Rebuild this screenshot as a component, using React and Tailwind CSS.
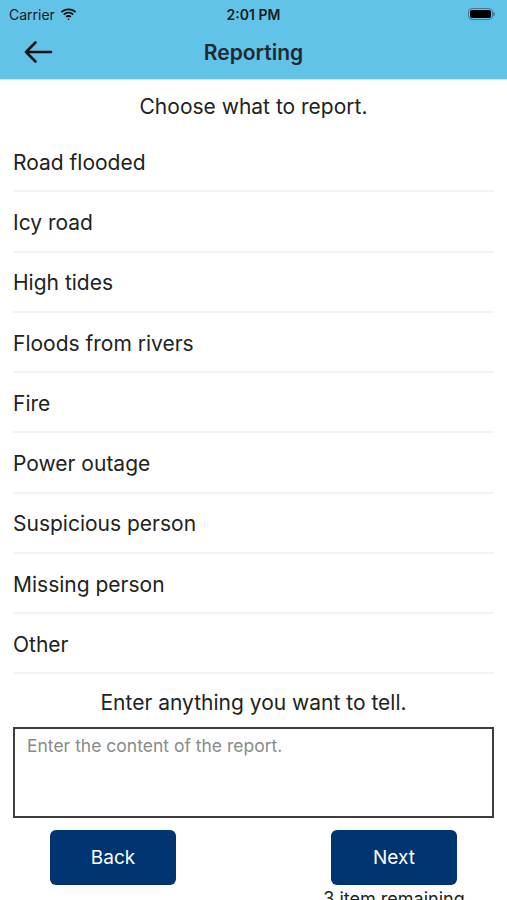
import React from "react";

const items = [
  "Road flooded",
  "Icy road",
  "High tides",
  "Floods from rivers",
  "Fire",
  "Power outage",
  "Suspicious person",
  "Missing person",
  "Other",
];

export default function App() {
  return (
    <div
      className="w-[507px] h-[900px] overflow-hidden bg-white text-[#1c1c1e]"
      style={{ fontFamily: "Inter, 'Noto Sans', sans-serif" }}
    >
      <div className="bg-[#62c3e8] border-b border-[#cfe3ea]">
        <div className="h-[28px] flex items-center justify-between px-[9px] relative">
          <div className="flex items-center gap-[5px] text-[14px] text-[#1a1a1a]">
            <span>Carrier</span>
            <svg width="17" height="12" viewBox="0 0 17 12">
              <path d="M8.5 2.2c2.5 0 4.8 1 6.5 2.6l1.2-1.3C14.2 1.6 11.5.4 8.5.4S2.8 1.6.8 3.5L2 4.8C3.7 3.2 6 2.2 8.5 2.2z" fill="#111" />
              <path d="M8.5 5.6c1.6 0 3 .6 4.1 1.6l1.2-1.3C12.4 4.6 10.5 3.8 8.5 3.8s-3.9.8-5.3 2.1l1.2 1.3c1.1-1 2.5-1.6 4.1-1.6z" fill="#111" />
              <path d="M8.5 8.9c.7 0 1.3.3 1.8.7l1.2-1.3c-.8-.7-1.9-1.2-3-1.2s-2.2.5-3 1.2l1.2 1.3c.5-.4 1.1-.7 1.8-.7z M8.5 10.2l-1 1.1 1 1 1-1z" fill="#111" />
            </svg>
          </div>
          <div className="absolute left-1/2 -translate-x-1/2 text-[14px] font-semibold text-[#1a1a1a]">
            2:01 PM
          </div>
          <div className="flex items-center mr-[3px]">
            <div className="w-[25px] h-[12px] rounded-[4px] border border-[#3a7d98] p-[1px]">
              <div className="w-full h-full rounded-[2px] bg-black" />
            </div>
            <div className="w-[2px] h-[4px] bg-[#3a7d98] rounded-r-sm" />
          </div>
        </div>
        <div className="h-[51px] flex items-center relative">
          <svg className="absolute left-[23px] top-[12px]" width="30" height="24" viewBox="0 0 30 24">
            <path d="M28 12H3M12.5 2.5L3 12l9.5 9.5" stroke="#111" strokeWidth="2.6" fill="none" strokeLinecap="round" strokeLinejoin="round" />
          </svg>
          <div className="w-full text-center text-[21px] font-semibold text-[#1f2a30] -mt-[2px]">Reporting</div>
        </div>
      </div>

      <div className="h-[52px] flex items-center justify-center pt-[2px] text-[21px] text-[#222]">
        Choose what to report.
      </div>

      <div className="px-[13px]">
        {items.map((it) => (
          <div
            key={it}
            className="h-[60.25px] flex items-center pt-[3px] border-b-2 border-[#f3f3f3] text-[21px] text-[#222]"
          >
            {it}
          </div>
        ))}
      </div>

      <div className="h-[53px] flex items-center justify-center pt-[3px] text-[21px] text-[#222]">
        Enter anything you want to tell.
      </div>

      <div className="mx-[13px] h-[91px] border-2 border-[#3d3d3d] px-[12px] py-[4px] text-[17.5px] text-[#8a8a8a]">
        Enter the content of the report.
      </div>

      <div className="flex justify-between px-[50px] mt-[12px]">
        <div className="w-[126px] h-[55px] rounded-[6px] bg-[#003571] flex items-center justify-center text-white text-[19px]">
          Back
        </div>
        <div className="w-[126px] flex flex-col items-center">
          <div className="w-[126px] h-[55px] rounded-[6px] bg-[#003571] flex items-center justify-center text-white text-[19px]">
            Next
          </div>
          <div className="mt-[0px] text-[18px] text-[#222] whitespace-nowrap">3 item remaining</div>
        </div>
      </div>
    </div>
  );
}
